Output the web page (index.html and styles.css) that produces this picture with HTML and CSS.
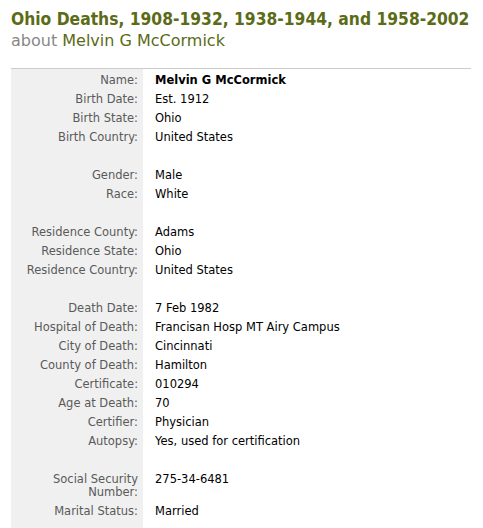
FILE: index.html
```html
<!DOCTYPE html>
<html lang="en">
<head>
    <meta charset="UTF-8">
    <title>Ohio Deaths - Melvin G McCormick</title>
    <link rel="stylesheet" href="styles.css">
</head>
<body>

    <div class="record">
        <h1>Ohio Deaths, 1908-1932, 1938-1944, and 1958-2002</h1>
        <h2><span class="about">about</span> Melvin G McCormick</h2>

        <table class="facts">
            <tr><th>Name:</th><td><b>Melvin G McCormick</b></td></tr>
            <tr><th>Birth Date:</th><td>Est. 1912</td></tr>
            <tr><th>Birth State:</th><td>Ohio</td></tr>
            <tr><th>Birth Country:</th><td>United States</td></tr>
            <tr class="spacer"><th>&nbsp;</th><td>&nbsp;</td></tr>
            <tr><th>Gender:</th><td>Male</td></tr>
            <tr><th>Race:</th><td>White</td></tr>
            <tr class="spacer"><th>&nbsp;</th><td>&nbsp;</td></tr>
            <tr><th>Residence County:</th><td>Adams</td></tr>
            <tr><th>Residence State:</th><td>Ohio</td></tr>
            <tr><th>Residence Country:</th><td>United States</td></tr>
            <tr class="spacer"><th>&nbsp;</th><td>&nbsp;</td></tr>
            <tr><th>Death Date:</th><td>7 Feb 1982</td></tr>
            <tr><th>Hospital of Death:</th><td>Francisan Hosp MT Airy Campus</td></tr>
            <tr><th>City of Death:</th><td>Cincinnati</td></tr>
            <tr><th>County of Death:</th><td>Hamilton</td></tr>
            <tr><th>Certificate:</th><td>010294</td></tr>
            <tr><th>Age at Death:</th><td>70</td></tr>
            <tr><th>Certifier:</th><td>Physician</td></tr>
            <tr><th>Autopsy:</th><td>Yes, used for certification</td></tr>
            <tr class="spacer"><th>&nbsp;</th><td>&nbsp;</td></tr>
            <tr><th>Social Security<br>Number:</th><td>275-34-6481</td></tr>
            <tr><th>Marital Status:</th><td>Married</td></tr>
            <tr class="spacer"><th>&nbsp;</th><td>&nbsp;</td></tr>
        </table>
    </div>

</body>
</html>
```

FILE: styles.css
```css
body {
    margin: 0;
    font-family: "DejaVu Sans", Verdana, sans-serif;
    color: #000;
    background-color: #fff;
}

.record {
    padding: 8px 12px 0 11px;
}

h1 {
    margin: 0;
    font-family: "DejaVu Sans Condensed", "DejaVu Sans", sans-serif;
    font-stretch: condensed;
    font-size: 17.3px;
    font-weight: bold;
    line-height: 22px;
    white-space: nowrap;
    color: #5b6b17;
}

h2 {
    margin: 0;
    font-size: 16px;
    font-weight: normal;
    line-height: 22px;
    color: #5b6b17;
}

h2 .about {
    color: #888;
}

.facts {
    width: 460px;
    margin-top: 16px;
    border-collapse: collapse;
    border-top: 1px solid #ccc;
    font-size: 11.5px;
    line-height: 13px;
}

.facts th {
    width: 127px;
    padding: 5px 5px 1px 0;
    text-align: right;
    vertical-align: top;
    font-weight: normal;
    color: #5a5a5a;
    background-color: #f0f0f0;
}

.facts td {
    padding: 5px 0 1px 12px;
    vertical-align: top;
    color: #000;
}
```
